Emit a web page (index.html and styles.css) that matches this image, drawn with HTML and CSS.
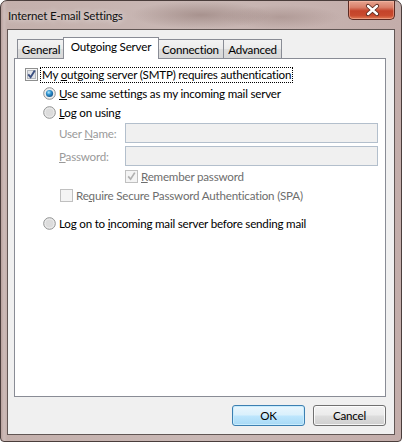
FILE: index.html
```html
<!DOCTYPE html>
<html>
<head>
<meta charset="utf-8">
<link rel="stylesheet" href="styles.css">
</head>
<body>
<div class="window">
  <div class="titlebar">
    <span class="title">Internet E-mail Settings</span>
    <div class="close">
      <svg width="47" height="19" viewBox="0 0 47 19">
        <path d="M19 5 L28 13 M28 5 L19 13" stroke="#5a2a20" stroke-width="4.2" stroke-linecap="round" fill="none"/>
        <path d="M19 5 L28 13 M28 5 L19 13" stroke="#ffffff" stroke-width="2.4" stroke-linecap="round" fill="none"/>
      </svg>
    </div>
  </div>
  <div class="client">
    <div class="tabs">
      <div class="tab t-general">General</div>
      <div class="tab active t-out">Outgoing Server</div>
      <div class="tab t-conn">Connection</div>
      <div class="tab t-adv">Advanced</div>
    </div>
    <div class="panel">
      <div class="row row-main">
        <svg class="cb" width="13" height="13" viewBox="0 0 13 13">
          <rect x="0.5" y="0.5" width="12" height="12" fill="#f6f6f6" stroke="#8e8f8f"/>
          <rect x="2.5" y="2.5" width="8" height="8" fill="#e2e4e8" stroke="#b4b8be"/>
          <path d="M3.2 6.4 L5.6 9.2 L9.8 2.6" stroke="#3b4f80" stroke-width="1.9" fill="none"/>
        </svg>
        <span class="focus">My <u>o</u>utgoing server (SMTP) requires authentication</span>
      </div>
      <div class="row row-radio">
        <svg class="rb" width="13" height="13" viewBox="0 0 13 13">
          <defs>
            <radialGradient id="dot" cx="0.4" cy="0.35" r="0.7">
              <stop offset="0" stop-color="#b9ecff"/>
              <stop offset="0.45" stop-color="#2f93cf"/>
              <stop offset="1" stop-color="#0f4f86"/>
            </radialGradient>
          </defs>
          <circle cx="6.5" cy="6.5" r="5.8" fill="#eeeeee" stroke="#8e8f8f"/>
          <circle cx="6.5" cy="6.5" r="3.6" fill="url(#dot)"/>
        </svg>
        <span class="lbl"><u>U</u>se same settings as my incoming mail server</span>
      </div>
      <div class="row row-radio">
        <svg class="rb" width="13" height="13" viewBox="0 0 13 13">
          <circle cx="6.5" cy="6.5" r="5.8" fill="#ececec" stroke="#8e8f8f"/>
          <circle cx="6.5" cy="6.5" r="4" fill="#dcdcdc"/>
        </svg>
        <span class="lbl"><u>L</u>og on using</span>
      </div>
      <div class="field first">
        <span class="flabel">User <u>N</u>ame:</span>
        <div class="input"></div>
      </div>
      <div class="field">
        <span class="flabel"><u>P</u>assword:</span>
        <div class="input"></div>
      </div>
      <div class="row row-remember">
        <svg class="cb" width="13" height="13" viewBox="0 0 13 13">
          <rect x="0.5" y="0.5" width="12" height="12" fill="#f4f4f4" stroke="#c0c0c0"/>
          <path d="M3.2 6.4 L5.6 9.2 L9.8 2.6" stroke="#b0b0b0" stroke-width="1.7" fill="none"/>
        </svg>
        <span class="lbl dis"><u>R</u>emember password</span>
      </div>
      <div class="row row-spa">
        <svg class="cb" width="13" height="13" viewBox="0 0 13 13">
          <rect x="0.5" y="0.5" width="12" height="12" fill="#f4f4f4" stroke="#c0c0c0"/>
        </svg>
        <span class="lbl dis">Re<u>q</u>uire Secure Password Authentication (SPA)</span>
      </div>
      <div class="row row-radio row-last">
        <svg class="rb" width="13" height="13" viewBox="0 0 13 13">
          <circle cx="6.5" cy="6.5" r="5.8" fill="#ececec" stroke="#8e8f8f"/>
          <circle cx="6.5" cy="6.5" r="4" fill="#dcdcdc"/>
        </svg>
        <span class="lbl">Log on to <u>i</u>ncoming mail server before sending mail</span>
      </div>
    </div>
    <div class="buttons">
      <button class="btn default">OK</button>
      <button class="btn">Cancel</button>
    </div>
  </div>
</div>
</body>
</html>
```
FILE: styles.css
```css
html, body {
  margin: 0;
  padding: 0;
  background: #ffffff;
}
body {
  font-family: Lato, "Noto Sans", sans-serif;
  font-size: 11.6px;
  letter-spacing: -0.2px;
  color: #000;
}
.window {
  width: 402px;
  height: 442px;
  box-sizing: border-box;
  border: 1px solid #4a3d3b;
  border-radius: 7px 7px 4px 4px;
  padding: 0 6px 6px 6px;
  display: flex;
  flex-direction: column;
  background:
    radial-gradient(ellipse 70px 14px at 200px 14px, rgba(140,115,110,0.55), rgba(140,115,110,0)),
    radial-gradient(ellipse 60px 12px at 280px 16px, rgba(150,125,120,0.45), rgba(150,125,120,0)),
    linear-gradient(to right, #b9a29e 0px, #cdbbb8 3px, #c4b0ac 6px, #c9b8b5 50%, #c3adaa 100%);
}
.titlebar {
  height: 28px;
  display: flex;
  justify-content: space-between;
  align-items: flex-start;
}
.title {
  margin-top: 6px;
  margin-left: 1px;
  line-height: 18px;
  color: #111;
  text-shadow: 0 0 6px rgba(255,255,255,0.9);
}
.close {
  width: 47px;
  height: 19px;
  box-sizing: border-box;
  border: 1px solid #5b2a22;
  border-top: none;
  border-radius: 0 0 5px 5px;
  background: linear-gradient(to bottom, #e7a490 0%, #d9806a 35%, #c4432a 55%, #c84a2e 80%, #e07a55 100%);
  box-shadow: inset 0 0 0 1px rgba(255,200,180,0.45);
}
.close svg { display: block; }
.client {
  flex: 1;
  border: 1px solid #615654;
  background: #f0f0f0;
  padding: 7px 8px 0 6px;
  display: flex;
  flex-direction: column;
}
.tabs {
  display: flex;
  align-items: flex-end;
  height: 21px;
  margin-left: 3px;
}
.tab {
  box-sizing: border-box;
  height: 19px;
  border: 1px solid #898c95;
  border-bottom: none;
  background: linear-gradient(to bottom, #f3f3f3 0%, #ebebeb 50%, #dddddd 51%, #d9d9d9 100%);
  text-align: center;
  line-height: 19px;
  color: #000;
  white-space: nowrap;
}
.t-general { width: 47px; border-right: none; }
.t-conn { width: 66px; border-left: none; }
.t-adv { width: 58px; border-left: none; }
.tab.active {
  height: 22px;
  background: #ffffff;
  margin-bottom: -1px;
  margin-left: -1px;
  margin-right: -1px;
  width: 96px;
  position: relative;
  z-index: 1;
  line-height: 18px;
}
.panel {
  width: 372px;
  height: 339px;
  box-sizing: border-box;
  background: #ffffff;
  border: 1px solid #898c95;
  padding-top: 6px;
}
.row {
  display: flex;
  align-items: center;
  height: 19px;
  white-space: nowrap;
}
.row svg { flex: none; display: block; }
.row-main { padding-left: 10px; }
.row-main .cb { margin-right: 2px; }
.focus {
  border: 1px dotted #000;
  padding: 0 1px;
  line-height: 14px;
}
.row-radio { padding-left: 28px; }
.row-radio .lbl { margin-left: 3px; }
.lbl { line-height: 16px; }
.field {
  display: flex;
  align-items: center;
  height: 20px;
  margin-top: 3px;
  padding-left: 44px;
  white-space: nowrap;
}
.field.first { margin-top: 1px; }
.flabel {
  width: 66px;
  flex: none;
  color: #9a9a9a;
}
.input {
  width: 253px;
  height: 20px;
  box-sizing: border-box;
  border: 1px solid #b3bfcc;
  background: #f0f0f0;
}
.row-remember { padding-left: 110px; margin-top: 1px; }
.row-remember .lbl, .row-spa .lbl { margin-left: 3px; }
.row-spa { padding-left: 45px; }
.dis { color: #6d6d6d; }
.row-last { margin-top: 9px; }
.buttons {
  display: flex;
  justify-content: flex-end;
  gap: 8px;
  margin-top: 8px;
}
.btn {
  width: 73px;
  height: 21px;
  box-sizing: border-box;
  border: 1px solid #707070;
  border-radius: 3px;
  font-family: Lato, "Noto Sans", sans-serif;
  font-size: 11.6px;
  letter-spacing: -0.2px;
  color: #000;
  padding: 0;
  background: linear-gradient(to bottom, #f2f2f2 0%, #ebebeb 48%, #dddddd 52%, #cfcfcf 100%);
  box-shadow: inset 0 0 0 1px rgba(255,255,255,0.8);
}
.btn.default {
  border-color: #3c7fb1;
  background: linear-gradient(to bottom, #eaf6fd 0%, #d9f0fc 48%, #bee6fd 52%, #a7d9f5 100%);
  box-shadow: inset 0 0 0 1px #c8ecfd;
}
u { text-decoration: underline; text-underline-offset: 1px; }
```
